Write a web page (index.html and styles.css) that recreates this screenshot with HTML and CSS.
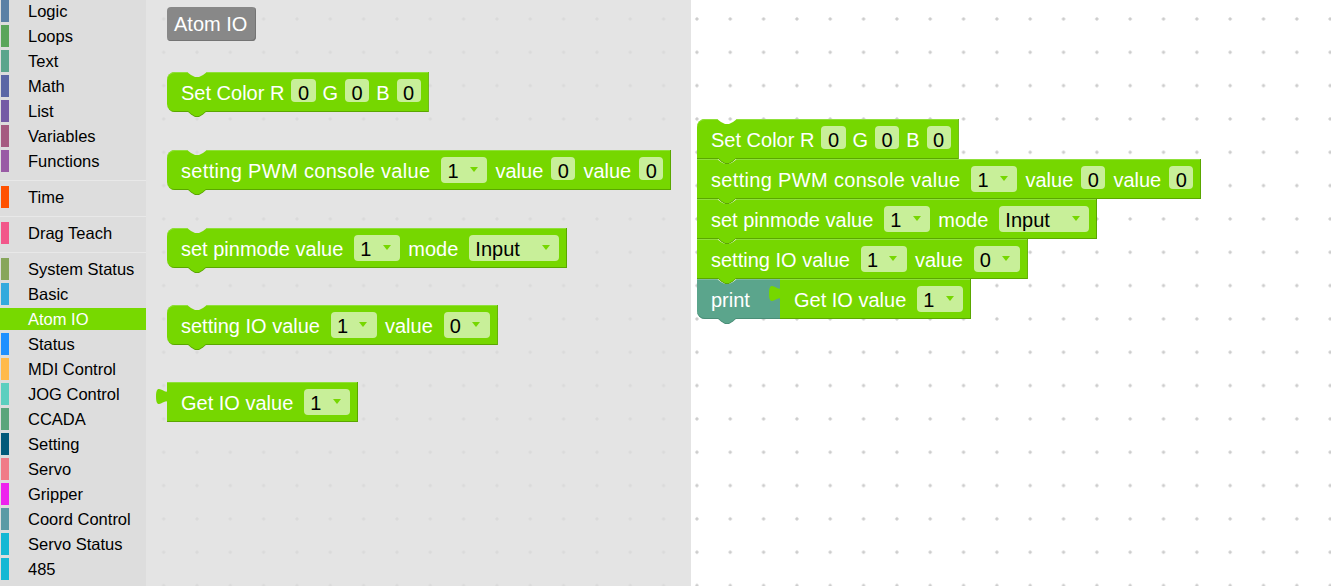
FILE: index.html
```html
<!DOCTYPE html>
<html>
<head>
<meta charset="utf-8">
<link rel="stylesheet" href="styles.css">
</head>
<body>
<div class="app">
  <nav class="toolbox">
    <div class="cat"><span class="sw sw-logic"></span><span class="nm">Logic</span></div>
    <div class="cat"><span class="sw sw-loops"></span><span class="nm">Loops</span></div>
    <div class="cat"><span class="sw sw-text"></span><span class="nm">Text</span></div>
    <div class="cat"><span class="sw sw-math"></span><span class="nm">Math</span></div>
    <div class="cat"><span class="sw sw-list"></span><span class="nm">List</span></div>
    <div class="cat"><span class="sw sw-vars"></span><span class="nm">Variables</span></div>
    <div class="cat"><span class="sw sw-func"></span><span class="nm">Functions</span></div>
    <div class="sep"></div>
    <div class="cat"><span class="sw sw-time"></span><span class="nm">Time</span></div>
    <div class="sep"></div>
    <div class="cat"><span class="sw sw-drag"></span><span class="nm">Drag Teach</span></div>
    <div class="sep"></div>
    <div class="cat"><span class="sw sw-sys"></span><span class="nm">System Status</span></div>
    <div class="cat"><span class="sw sw-basic"></span><span class="nm">Basic</span></div>
    <div class="cat sel"><span class="sw sw-atom"></span><span class="nm">Atom IO</span></div>
    <div class="cat"><span class="sw sw-status"></span><span class="nm">Status</span></div>
    <div class="cat"><span class="sw sw-mdi"></span><span class="nm">MDI Control</span></div>
    <div class="cat"><span class="sw sw-jog"></span><span class="nm">JOG Control</span></div>
    <div class="cat"><span class="sw sw-ccada"></span><span class="nm">CCADA</span></div>
    <div class="cat"><span class="sw sw-setting"></span><span class="nm">Setting</span></div>
    <div class="cat"><span class="sw sw-servo"></span><span class="nm">Servo</span></div>
    <div class="cat"><span class="sw sw-grip"></span><span class="nm">Gripper</span></div>
    <div class="cat"><span class="sw sw-coord"></span><span class="nm">Coord Control</span></div>
    <div class="cat"><span class="sw sw-sstat"></span><span class="nm">Servo Status</span></div>
    <div class="cat"><span class="sw sw-485"></span><span class="nm">485</span></div>
  </nav>

  <main class="workspace">
    <div class="flyout">
      <div class="label">Atom IO</div>

      <div class="item item-color">
        <div class="blk round gap7">
          <span>Set Color R</span><span class="fld">0</span>
          <span>G</span><span class="fld">0</span>
          <span>B</span><span class="fld">0</span>
        </div>
        <div class="tab"></div>
      </div>

      <div class="item item-pwm">
        <div class="blk round">
          <span class="spaced">setting PWM console value</span>
          <span class="dd">1<i class="arrow"></i></span>
          <span>value</span><span class="fld">0</span>
          <span>value</span><span class="fld">0</span>
        </div>
        <div class="tab"></div>
      </div>

      <div class="item item-pin">
        <div class="blk round">
          <span>set pinmode value</span>
          <span class="dd">1<i class="arrow"></i></span>
          <span>mode</span>
          <span class="dd wide">Input<i class="arrow"></i></span>
        </div>
        <div class="tab"></div>
      </div>

      <div class="item item-io">
        <div class="blk round">
          <span>setting IO value</span>
          <span class="dd">1<i class="arrow"></i></span>
          <span>value</span>
          <span class="dd">0<i class="arrow"></i></span>
        </div>
        <div class="tab"></div>
      </div>

      <div class="item item-get">
        <div class="blk out">
          <svg class="puzzle" viewBox="0 0 8 15" preserveAspectRatio="none"><path d="M8,0 C8,10 0,-8 0,7.5 S8,5 8,15 Z"/></svg>
          <span>Get IO value</span>
          <span class="dd">1<i class="arrow"></i></span>
        </div>
      </div>
    </div>

    <div class="stack">
      <div class="blk top gap7">
        <span>Set Color R</span><span class="fld">0</span>
        <span>G</span><span class="fld">0</span>
        <span>B</span><span class="fld">0</span>
      </div>
      <div class="tab"></div>
      <div class="blk">
        <span class="spaced">setting PWM console value</span>
        <span class="dd">1<i class="arrow"></i></span>
        <span>value</span><span class="fld">0</span>
        <span>value</span><span class="fld">0</span>
      </div>
      <div class="tab"></div>
      <div class="blk">
        <span>set pinmode value</span>
        <span class="dd">1<i class="arrow"></i></span>
        <span>mode</span>
        <span class="dd wide">Input<i class="arrow"></i></span>
      </div>
      <div class="tab"></div>
      <div class="blk">
        <span>setting IO value</span>
        <span class="dd">1<i class="arrow"></i></span>
        <span>value</span>
        <span class="dd">0<i class="arrow"></i></span>
      </div>
      <div class="tab"></div>
      <div class="print-row">
        <div class="blk print">
          <span>print</span>
        </div>
        <div class="blk out">
          <svg class="puzzle" viewBox="0 0 8 15" preserveAspectRatio="none"><path d="M8,0 C8,10 0,-8 0,7.5 S8,5 8,15 Z"/></svg>
          <span>Get IO value</span>
          <span class="dd">1<i class="arrow"></i></span>
        </div>
      </div>
      <div class="tab teal"></div>
    </div>
  </main>
</div>
</body>
</html>
```
FILE: styles.css
```css
* { box-sizing: border-box; }

body {
  margin: 0;
  font-family: "Liberation Sans", Arial, sans-serif;
  background: #fff;
}

.app {
  display: flex;
  width: 1331px;
  height: 586px;
  overflow: hidden;
}

/* ---------- toolbox ---------- */
.toolbox {
  width: 146px;
  flex: none;
  display: flex;
  flex-direction: column;
  background: #dddddd;
}

.cat {
  height: 22px;
  margin-bottom: 3px;
  display: flex;
  align-items: center;
  font-size: 16.5px;
  color: #000;
  white-space: nowrap;
  flex: none;
}

.cat .nm { line-height: 20px; }

.cat .sw {
  width: 8px;
  height: 22px;
  margin-left: 1px;
  margin-right: 19px;
  flex: none;
}

.cat.sel {
  background: #77d900;
  color: #fff;
}

.sep {
  flex: none;
  border-bottom: 1px solid #e8e8e8;
  margin: 5px 0;
}

.sw-logic { background: #5b80a5; }
.sw-loops { background: #5ba55b; }
.sw-text { background: #5ba58c; }
.sw-math { background: #5b67a5; }
.sw-list { background: #745ba5; }
.sw-vars { background: #a55b80; }
.sw-func { background: #995ba5; }
.sw-time { background: #ff5100; }
.sw-drag { background: #f2578a; }
.sw-sys { background: #87a65b; }
.sw-basic { background: #33aadd; }
.sw-atom { background: #77d900; }
.sw-status { background: #1e90ff; }
.sw-mdi { background: #ffba4a; }
.sw-jog { background: #5ccfbf; }
.sw-ccada { background: #5ba57b; }
.sw-setting { background: #035a7a; }
.sw-servo { background: #f07b87; }
.sw-grip { background: #ee22ee; }
.sw-coord { background: #5b9aa5; }
.sw-sstat { background: #14b8d4; }
.sw-485 { background: #14b8d4; }

/* ---------- workspace ---------- */
.workspace {
  flex: 1;
  position: relative;
  background-color: #fff;
  background-image: radial-gradient(circle at center, #cccccc 1.3px, rgba(204,204,204,0) 1.9px);
  background-size: 33.333px 33.333px;
  background-position: 1px 2.3px;
}

.flyout {
  position: absolute;
  left: 0;
  top: 0;
  bottom: 0;
  width: 545px;
  background: rgba(221, 221, 221, 0.8);
  padding-left: 21px;
  display: flex;
  flex-direction: column;
  align-items: flex-start;
}

.label {
  margin-top: 7px;
  height: 34px;
  padding: 0 9px 0 7px;
  display: flex;
  align-items: center;
  background: #888888;
  border-radius: 4px;
  box-shadow: inset -1px -1px 0 #747474;
  color: #fff;
  font-size: 20px;
}

.item { display: flex; flex-direction: column; align-items: flex-start; }
.item-color { margin-top: 31px; }
.item-pwm { margin-top: 33px; }
.item-pin { margin-top: 33px; }
.item-io { margin-top: 32px; }
.item-get { margin-top: 32px; }

/* ---------- blocks ---------- */
.blk {
  position: relative;
  display: flex;
  align-items: flex-start;
  gap: 8px;
  height: 40px;
  padding: 7px 8px 0 14px;
  background: #76d700;
  color: #fff;
  font-size: 20px;
  line-height: 23px;
  white-space: nowrap;
  box-shadow: inset -1px -1px 0 #5aa700, inset 0 1px 0 #8fe03a;
  clip-path: polygon(0 0, 20px 0, 24px 3px, 28px 5px, 32px 5px, 36px 3px, 40px 0, 100% 0, 100% 100%, 0 100%);
}

.blk > span { padding-top: 2.5px; }

.blk .spaced { letter-spacing: 0.33px; }

.blk.gap7 { gap: 7px; }

.blk.round { border-radius: 8px 0 0 8px; }
.blk.top { border-radius: 8px 0 0 0; }

.blk.out {
  clip-path: none;
}

.puzzle {
  position: absolute;
  left: -11px;
  top: 6px;
  width: 12px;
  height: 17px;
  fill: #76d700;
}

.tab {
  position: relative;
  width: 20px;
  height: 6px;
  margin-top: -1px;
  margin-left: 20px;
  background: #5aa700;
  clip-path: polygon(0 0, 100% 0, 80% 60%, 60% 100%, 40% 100%, 20% 60%);
}

.tab::before {
  content: "";
  position: absolute;
  left: 0;
  right: 0;
  top: -1px;
  height: 6px;
  background: #76d700;
  clip-path: polygon(0 0, 100% 0, 80% 60%, 60% 100%, 40% 100%, 20% 60%);
}

.tab.teal { background: #4a8e77; }
.tab.teal::before { background: #5ba58c; }

.blk > .fld {
  height: 23px;
  padding: 2.5px 6.5px 0;
  background: rgba(255, 255, 255, 0.6);
  border-radius: 4px;
  color: #000;
}

.blk > .dd {
  height: 26px;
  width: 46px;
  margin-top: -0.5px;
  margin-left: 3px;
  padding: 3px 9.5px 0 6px;
  display: flex;
  align-items: flex-start;
  justify-content: space-between;
  background: rgba(255, 255, 255, 0.6);
  border-radius: 4px;
  color: #000;
}

.blk > .dd.wide { width: 90px; }

.arrow {
  align-self: center;
  margin-top: -3px;
  width: 0;
  height: 0;
  border-left: 4px solid transparent;
  border-right: 4px solid transparent;
  border-top: 5px solid #76d700;
}

/* ---------- stacked program ---------- */
.stack {
  position: absolute;
  left: 551px;
  top: 119px;
  display: flex;
  flex-direction: column;
  align-items: flex-start;
}

.stack .tab + .blk,
.stack .tab + .print-row {
  margin-top: -5px;
}

.print-row {
  display: flex;
  position: relative;
}

.blk.print {
  width: 83px;
  background: #5ba58c;
  border-radius: 0 0 0 8px;
  box-shadow: inset 0 -1px 0 #4a8e77, inset 0 1px 0 #7ab9a3;
}
```
